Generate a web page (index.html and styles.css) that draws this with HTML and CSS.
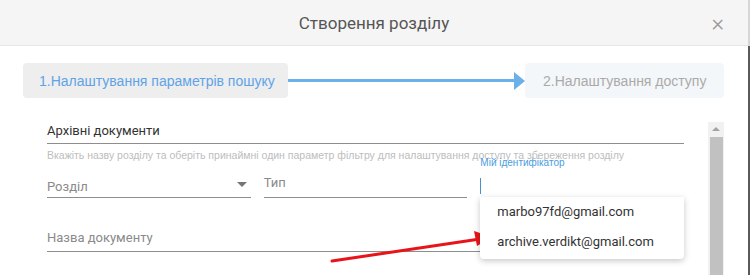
FILE: index.html
```html
<!DOCTYPE html>
<html lang="uk">
<head>
<meta charset="UTF-8" />
<meta name="viewport" content="width=device-width, initial-scale=1.0" />
<title>Створення розділу</title>
<link rel="stylesheet" href="styles.css">
</head>
<body>
<div class="modal">
  <div class="modal-header">
    <h3 class="modal-title">Створення розділу</h3>
    <span class="modal-close">&times;</span>
  </div>

  <div class="steps">
    <div class="step step-active">1.Налаштування параметрів пошуку</div>
    <div class="step-link"><span class="step-line"></span><span class="step-head"></span></div>
    <div class="step step-next">2.Налаштування доступу</div>
  </div>

  <div class="content">
    <div class="form">
      <div class="field field-wide">
        <div class="field-value">Архівні документи</div>
      </div>
      <div class="hint">Вкажіть назву розділу та оберіть принаймні один параметр фільтру для налаштування доступу та збереження розділу</div>

      <div class="row">
        <div class="field field-select">
          <div class="field-placeholder">Розділ</div>
          <span class="caret"></span>
        </div>
        <div class="field">
          <div class="field-placeholder field-raised">Тип</div>
        </div>
        <div class="field field-focused">
          <label class="field-label">Мій ідентифікатор</label>
          <span class="cursor"></span>
          <!-- autocomplete list -->
          <ul class="suggest">
            <li>marbo97fd@gmail.com</li>
            <li>archive.verdikt@gmail.com</li>
          </ul>
        </div>
      </div>

      <div class="field field-wide field-doc">
        <div class="field-placeholder">Назва документу</div>
      </div>
    </div>

    <div class="scrollbar">
      <div class="scroll-up"></div>
      <div class="scroll-thumb"></div>
    </div>
  </div>

  <svg class="pointer" width="170" height="40" viewBox="0 0 170 40">
    <line x1="2" y1="35" x2="150" y2="13" stroke="#e8141a" stroke-width="3" stroke-linecap="round" />
    <polygon points="162,11 144,5 147,20" fill="#e8141a" />
  </svg>
</div>
</body>
</html>
```

FILE: styles.css
```css
body {
margin: 0;
background: #fff;
font-family: 'Roboto', 'Liberation Sans', sans-serif;
overflow: hidden;
}

.modal {
position: relative;
width: 748px;
height: 275px;
border-right: 2px solid #5a5a5a;
background: #fff;
}

.modal-header {
height: 45px;
margin-right: -2px;
background: #f5f5f5;
border-right: 2px solid #d6d6d6;
border-bottom: 1px solid #e6e6e6;
display: flex;
align-items: center;
justify-content: center;
position: relative;
}

.modal-title {
margin: 0;
font-weight: 400;
font-size: 17px;
color: #555;
}

.modal-close {
position: absolute;
right: 24px;
top: 9px;
font-size: 24px;
font-weight: 300;
color: #9a9a9a;
}

/* steps */
.steps {
display: flex;
align-items: center;
margin: 17px 0 0 23px;
}

.step {
height: 35px;
display: flex;
align-items: center;
padding-left: 16px;
border-radius: 4px;
font-family: 'Liberation Sans', Arial, sans-serif;
font-size: 14px;
box-sizing: border-box;
}

.step-active {
width: 265px;
background: #eeeeee;
color: #5fa3e6;
}

.step-next {
width: 199px;
background: #f4f7f9;
color: #aaaaaa;
padding-left: 18px;
}

.step-link {
display: flex;
align-items: center;
width: 237px;
}

.step-line {
flex: 1;
height: 3px;
background: #6cb0ea;
}

.step-head {
width: 0;
height: 0;
border-top: 9px solid transparent;
border-bottom: 9px solid transparent;
border-left: 11px solid #6cb0ea;
}

/* form */
.content {
display: flex;
margin-top: 24px;
}

.form {
width: 637px;
margin-left: 47px;
}

.field {
position: relative;
height: 21px;
border-bottom: 1px solid #8e8e8e;
font-size: 13px;
}

.field-value {
color: #333;
line-height: 18px;
}

.hint {
font-family: 'Liberation Sans', Arial, sans-serif;
font-size: 10.5px;
color: #bdbdbd;
margin-top: 5px;
white-space: nowrap;
}

.row {
display: grid;
grid-template-columns: 1fr 1fr 1fr;
column-gap: 13px;
margin-top: 14px;
}

.row .field {
height: 22px;
}

.field-placeholder {
color: #8a8a8a;
font-size: 13px;
line-height: 18px;
}

.field-select .field-placeholder {
padding-top: 3px;
}

.field-raised {
position: relative;
top: -1px;
}

.caret {
position: absolute;
right: 4px;
top: 7px;
width: 0;
height: 0;
border-left: 5px solid transparent;
border-right: 5px solid transparent;
border-top: 5px solid #757575;
}

.field-focused {
border-bottom: 1px solid #5a9fd6;
}

.field-label {
position: absolute;
top: -18px;
left: 0;
font-family: 'Liberation Sans', Arial, sans-serif;
font-size: 10px;
color: #4a9de0;
}

.cursor {
position: absolute;
left: 0;
top: 3px;
width: 1px;
height: 16px;
background: #4d8fc8;
}

.suggest {
position: absolute;
top: 22px;
left: 0;
width: 204px;
margin: 0;
padding: 0 0 2px;
list-style: none;
background: #fff;
border-radius: 0 0 4px 4px;
box-shadow: 0 2px 6px rgba(0, 0, 0, 0.22);
z-index: 2;
}

.suggest li {
height: 30px;
line-height: 30px;
padding-left: 17px;
font-size: 13px;
color: #333;
}

.field-doc {
margin-top: 28px;
height: 25px;
}

.field-doc .field-placeholder {
padding-top: 3px;
}

/* scrollbar */
.scrollbar {
width: 16px;
margin-left: 24px;
background: #f1f1f1;
height: 153px;
display: flex;
flex-direction: column;
align-items: center;
}

.scroll-up {
width: 0;
height: 0;
border-left: 4px solid transparent;
border-right: 4px solid transparent;
border-bottom: 4px solid #a3a3a3;
margin-top: 5px;
margin-bottom: 6px;
}

.scroll-thumb {
flex: 1;
width: 13px;
background: #c1c1c1;
}

.pointer {
position: absolute;
left: 330px;
top: 226px;
}
```
